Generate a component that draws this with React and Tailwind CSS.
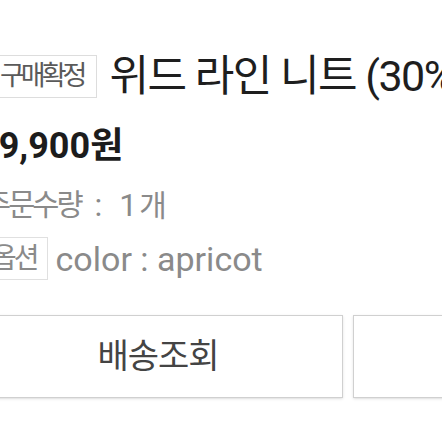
const FONT = { fontFamily: 'Roboto, "Noto Sans CJK KR", sans-serif' };

const OrderItem = () => {
  return (
    <div className="w-[442px] h-[442px] overflow-hidden bg-white" style={FONT}>
      <div className="pt-[55px] ml-[-16px] whitespace-nowrap">
        {/* Title row */}
        <div className="flex items-center gap-[12px] h-[43px]">
          <span className="ml-[7px] h-[43px] flex items-center pl-[8px] pr-[13px] border border-[#dddddd] text-[27px] text-[#5a5a5a] tracking-[-4px]">
            구매확정
          </span>
          <span className="text-[43px] leading-none text-[#1e1e1e] tracking-[-1.5px]">
            위드 라인 니트 (30% 울)
          </span>
        </div>

        {/* Price */}
        <div className="mt-[28px] ml-[-6px] h-[40px] flex items-center text-[36px] font-bold text-[#1c1c1c]">
          29,900원
        </div>

        {/* Quantity */}
        <div className="mt-[19px] h-[40px] flex items-center text-[32px] text-[#8a8a8a]">
          <span className="text-[29.5px] tracking-[-3px]">주문수량</span>
          <span className="ml-[14px] mr-[17px]">:</span>
          <span>1</span>
          <span className="ml-[2px] text-[30px]">개</span>
        </div>

        {/* Option */}
        <div className="mt-[12px] h-[43px] flex items-center gap-[8px]">
          <span className="h-[43px] flex items-center pl-[6px] pr-[10px] border border-[#e0e0e0] text-[28px] text-[#8a8a8a] tracking-[-3px]">
            옵션
          </span>
          <span className="text-[34px] leading-none text-[#8a8a8a]">color : apricot</span>
        </div>
      </div>

      {/* Buttons */}
      <div className="mt-[35px] ml-[-27px] flex gap-[10px]">
        <button className="shrink-0 w-[370px] h-[83px] bg-white border border-[#d0d0d0] shadow-sm text-[34px] text-[#444444] tracking-[-1px]">
          배송조회
        </button>
        <button className="shrink-0 w-[370px] h-[83px] bg-white border border-[#d0d0d0] shadow-sm text-[34px] text-[#444444] tracking-[-1px]">
          후기작성
        </button>
      </div>
    </div>
  );
};

export default function App() {
  return <OrderItem />;
}
